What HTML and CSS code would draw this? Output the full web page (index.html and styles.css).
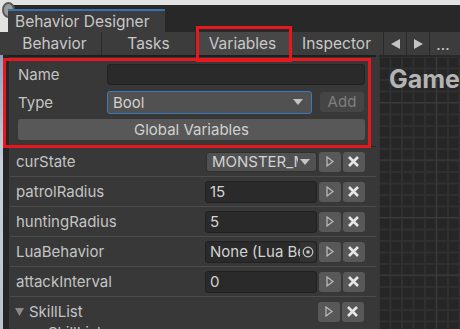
FILE: index.html
```html
<!DOCTYPE html>
<html lang="en">
<head>
    <meta charset="UTF-8">
    <title>Behavior Designer</title>
    <link rel="stylesheet" href="styles.css">
</head>
<body>
    <div class="screen">
        <div class="chrome">
            <span class="app-icon"></span>
        </div>

        <div class="titlebar">
            <div class="title-tab">Behavior Designer</div>
        </div>

        <div class="toolbar">
            <div class="tool">Behavior</div>
            <div class="tool">Tasks</div>
            <div class="tool active">Variables</div>
            <div class="tool">Inspector</div>
            <div class="tool small">
                <svg width="12" height="12" viewBox="0 0 12 12"><polygon points="11,1 11,11 2,6" fill="#c4c4c4"/></svg>
            </div>
            <div class="tool small">
                <svg width="12" height="12" viewBox="0 0 12 12"><polygon points="2,1 2,11 11,6" fill="#c4c4c4"/></svg>
            </div>
            <div class="tool more">...</div>
        </div>

        <div class="main">
            <div class="edge"></div>

            <div class="side">
                <div class="vars">
                    <div class="vars-row">
                        <span class="vars-label">Name</span>
                        <div class="field name-field"></div>
                    </div>
                    <div class="vars-row">
                        <span class="vars-label">Type</span>
                        <div class="popup type-popup">
                            <span>Bool</span>
                            <svg width="10" height="6" viewBox="0 0 10 6"><polygon points="0,0 10,0 5,6" fill="#c4c4c4"/></svg>
                        </div>
                        <div class="btn add-btn">Add</div>
                    </div>
                    <div class="btn global-btn">Global Variables</div>
                </div>

                <div class="row">
                    <span class="label">curState</span>
                    <div class="popup value"><span>MONSTER_MOVE</span>
                        <svg width="10" height="6" viewBox="0 0 10 6"><polygon points="0,0 10,0 5,6" fill="#c4c4c4"/></svg>
                    </div>
                    <div class="btn icon-btn"><svg width="8" height="11" viewBox="0 0 8 11"><polygon points="1,1 1,10 7,5.5" fill="none" stroke="#bdbdbd" stroke-width="1.2"/></svg></div>
                    <div class="btn icon-btn"><svg width="13" height="13" viewBox="0 0 13 13"><path d="M2 2 L11 11 M11 2 L2 11" stroke="#e6e6e6" stroke-width="2.6"/></svg></div>
                </div>
                <div class="row">
                    <span class="label">patrolRadius</span>
                    <div class="field value">15</div>
                    <div class="btn icon-btn"><svg width="8" height="11" viewBox="0 0 8 11"><polygon points="1,1 1,10 7,5.5" fill="none" stroke="#bdbdbd" stroke-width="1.2"/></svg></div>
                    <div class="btn icon-btn"><svg width="13" height="13" viewBox="0 0 13 13"><path d="M2 2 L11 11 M11 2 L2 11" stroke="#e6e6e6" stroke-width="2.6"/></svg></div>
                </div>
                <div class="row">
                    <span class="label">huntingRadius</span>
                    <div class="field value">5</div>
                    <div class="btn icon-btn"><svg width="8" height="11" viewBox="0 0 8 11"><polygon points="1,1 1,10 7,5.5" fill="none" stroke="#bdbdbd" stroke-width="1.2"/></svg></div>
                    <div class="btn icon-btn"><svg width="13" height="13" viewBox="0 0 13 13"><path d="M2 2 L11 11 M11 2 L2 11" stroke="#e6e6e6" stroke-width="2.6"/></svg></div>
                </div>
                <div class="row">
                    <span class="label">LuaBehavior</span>
                    <div class="field value object-field">
                        <span>None (Lua Behavior)</span>
                        <div class="picker"><svg width="12" height="12" viewBox="0 0 12 12"><circle cx="6" cy="6" r="4.8" fill="none" stroke="#c4c4c4" stroke-width="1.2"/><circle cx="6" cy="6" r="1.8" fill="#c4c4c4"/></svg></div>
                    </div>
                    <div class="btn icon-btn"><svg width="8" height="11" viewBox="0 0 8 11"><polygon points="1,1 1,10 7,5.5" fill="none" stroke="#bdbdbd" stroke-width="1.2"/></svg></div>
                    <div class="btn icon-btn"><svg width="13" height="13" viewBox="0 0 13 13"><path d="M2 2 L11 11 M11 2 L2 11" stroke="#e6e6e6" stroke-width="2.6"/></svg></div>
                </div>
                <div class="row">
                    <span class="label">attackInterval</span>
                    <div class="field value">0</div>
                    <div class="btn icon-btn"><svg width="8" height="11" viewBox="0 0 8 11"><polygon points="1,1 1,10 7,5.5" fill="none" stroke="#bdbdbd" stroke-width="1.2"/></svg></div>
                    <div class="btn icon-btn"><svg width="13" height="13" viewBox="0 0 13 13"><path d="M2 2 L11 11 M11 2 L2 11" stroke="#e6e6e6" stroke-width="2.6"/></svg></div>
                </div>
                <div class="row list-row">
                    <span class="label foldout">
                        <svg width="9" height="8" viewBox="0 0 9 8"><polygon points="0,0 9,0 4.5,8" fill="#8a8a8a"/></svg>
                        SkillList
                    </span>
                    <div class="spacer"></div>
                    <div class="btn icon-btn"><svg width="8" height="11" viewBox="0 0 8 11"><polygon points="1,1 1,10 7,5.5" fill="none" stroke="#bdbdbd" stroke-width="1.2"/></svg></div>
                    <div class="btn icon-btn"><svg width="13" height="13" viewBox="0 0 13 13"><path d="M2 2 L11 11 M11 2 L2 11" stroke="#e6e6e6" stroke-width="2.6"/></svg></div>
                </div>
                <div class="sub-row">
                    <svg width="9" height="8" viewBox="0 0 9 8"><polygon points="0,0 9,0 4.5,8" fill="#8a8a8a"/></svg>
                    SkillList
                </div>
            </div>

            <div class="graph">
                <div class="graph-title">Game</div>
            </div>
        </div>

        <!-- red annotation boxes -->
        <div class="mark mark-tab"></div>
        <div class="mark mark-panel"></div>
    </div>
</body>
</html>
```

FILE: styles.css
```css
body {
    margin: 0;
    background: #191919;
    font-family: 'Inter', 'Noto Sans', sans-serif;
    color: #c4c4c4;
}

.screen {
    position: relative;
    width: 460px;
    height: 329px;
    overflow: hidden;
    background: #282828;
}

.chrome {
    height: 5px;
    background: #e2e2e2;
    position: relative;
}

.app-icon {
    position: absolute;
    left: 2px;
    top: 2px;
    width: 9px;
    height: 12px;
    border-radius: 50%;
    border: 2px solid #5a5a5a;
    background: #9a9a9a;
    z-index: 2;
}

.titlebar {
    height: 27px;
    background: #282828;
    display: flex;
    align-items: flex-end;
    padding-left: 8px;
    box-shadow: inset 8px 0 0 #e2e2e2;
}

.title-tab {
    position: relative;
    z-index: 3;
    width: 150px;
    height: 21px;
    padding-left: 7px;
    background: #3c3c3c;
    border-top: 2px solid #3a72b0;
    font-size: 15.5px;
    line-height: 21px;
    color: #c8c8c8;
}

.toolbar {
    height: 23px;
    display: flex;
    background: #3c3c3c;
    padding-left: 8px;
}

.tool {
    width: 93px;
    border-right: 1px solid #2a2a2a;
    font-size: 15.5px;
    line-height: 23px;
    text-align: center;
    color: #c8c8c8;
}

.tool.active {
    background: #474747;
}

.tool.small {
    width: 22px;
    display: flex;
    align-items: center;
    justify-content: center;
}

.tool.more {
    width: 26px;
    border-right: none;
    line-height: 26px;
}

.main {
    display: flex;
    height: 274px;
}

.edge {
    width: 3px;
    background: linear-gradient(#8da3bd, #c6d1dc 40%, #b9c4cf);
    border-right: 6px solid #262626;
}

.side {
    width: 371px;
    background: #383838;
    border-right: 3px solid #383838;
}

.vars {
    height: 92px;
    padding: 6px 6px 0 9px;
    box-sizing: border-box;
    background: #383838;
    border-top: 2px solid #1e1e1e;
    border-bottom: 1px solid #262626;
}

.vars-row {
    display: flex;
    align-items: center;
    height: 22px;
    margin-bottom: 6px;
}

.vars-label {
    width: 89px;
    font-size: 15px;
}

.field {
    height: 21px;
    box-sizing: border-box;
    background: #2a2a2a;
    border: 1px solid #212121;
    border-radius: 3px;
    font-size: 15px;
    line-height: 19px;
    padding-left: 4px;
    color: #d2d2d2;
}

.name-field {
    width: 258px;
}

.popup {
    height: 21px;
    box-sizing: border-box;
    display: flex;
    align-items: center;
    justify-content: space-between;
    background: #515151;
    border: 1px solid #303030;
    border-radius: 3px;
    padding: 0 8px 0 5px;
    font-size: 15px;
    color: #d2d2d2;
    overflow: hidden;
}

.popup span {
    overflow: hidden;
    white-space: nowrap;
    flex: 1;
}

.popup svg {
    flex: none;
    margin-left: 2px;
}

.type-popup {
    width: 205px;
    height: 23px;
    border: 1px solid #3a79bb;
}

.btn {
    background: #585858;
    border-radius: 3px;
    font-size: 15px;
    text-align: center;
    color: #d2d2d2;
}

.add-btn {
    width: 44px;
    height: 20px;
    line-height: 20px;
    margin-left: 8px;
    background: #454545;
    color: #7f7f7f;
}

.global-btn {
    width: 347px;
    height: 21px;
    line-height: 21px;
    background: #585858;
    margin-top: 3px;
}

.row {
    display: flex;
    align-items: center;
    height: 29px;
    border-bottom: 1px solid #4c4c4c;
    padding-left: 6px;
    margin-left: 1px;
}

.row:first-of-type {
    height: 27px;
}

.label {
    width: 189px;
    font-size: 15px;
    white-space: nowrap;
}

.value {
    width: 112px;
    height: 22px;
    flex: none;
}

.row .popup {
    height: 20px;
    width: 111px;
    margin-left: 1px;
    padding-right: 6px;
}

.object-field {
    display: flex;
    align-items: center;
    padding-right: 0;
    overflow: hidden;
}

.object-field span {
    flex: 1;
    white-space: nowrap;
    overflow: hidden;
}

.picker {
    width: 16px;
    height: 20px;
    background: #333333;
    display: flex;
    align-items: center;
    justify-content: center;
    border-radius: 0 3px 3px 0;
}

.icon-btn {
    width: 22px;
    height: 20px;
    margin-left: 2px;
    display: flex;
    align-items: center;
    justify-content: center;
}

.icon-btn:first-of-type {
    margin-left: 5px;
}

.list-row {
    border-bottom: none;
}

.foldout {
    display: flex;
    align-items: center;
    gap: 5px;
    margin-left: -1px;
}

.spacer {
    width: 112px;
}

.sub-row {
    display: flex;
    align-items: center;
    gap: 7px;
    padding-left: 23px;
    font-size: 15px;
    margin-top: -3px;
}

.graph {
    flex: 1;
    margin-top: 2px;
    background-color: #262626;
    background-image:
        linear-gradient(90deg, #3a3a3a 1px, transparent 1px),
        linear-gradient(#3a3a3a 1px, transparent 1px),
        linear-gradient(90deg, #303030 2px, transparent 2px),
        linear-gradient(#303030 2px, transparent 2px);
    background-size: 57.5px 57.5px, 57.5px 57.5px, 11.5px 11.5px, 11.5px 11.5px;
    background-position: 57px 0, 0 45px, -1px 0, 0 -1px;
}

.graph-title {
    font-size: 25px;
    font-weight: bold;
    color: #b4b4b4;
    padding: 7px 0 0 10px;
    white-space: nowrap;
}

.mark {
    position: absolute;
    border: 3px solid #e8161d;
    box-sizing: border-box;
    z-index: 5;
}

.mark-tab {
    left: 196px;
    top: 26px;
    width: 96px;
    height: 36px;
}

.mark-panel {
    left: 3px;
    top: 58px;
    width: 368px;
    height: 90px;
}
```
